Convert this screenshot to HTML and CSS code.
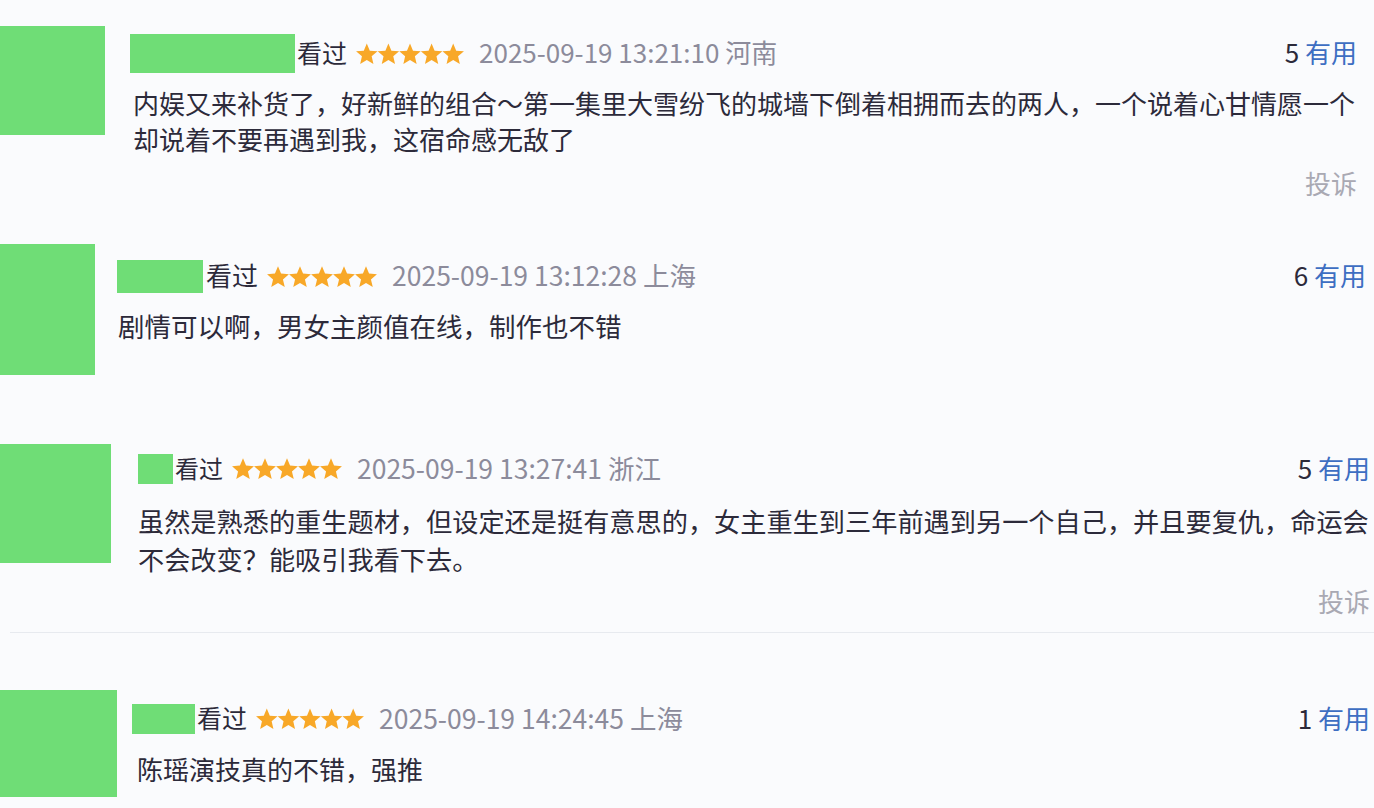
FILE: index.html
```html
<!DOCTYPE html>
<html lang="zh-CN">
<head>
<meta charset="utf-8">
<title>短评</title>
<link rel="stylesheet" href="styles.css">
</head>
<body>
<main class="list">
  <section class="comment c1">
    <div class="avatar"></div>
    <div class="body">
      <div class="head">
        <span class="name"></span><span class="status">看过</span>
        <span class="stars">
          <svg viewBox="0 0 110 22" aria-hidden="true"><g fill="#f8a828"><polygon transform="translate(0 0)" points="11,0.3 14.06,7.59 21.94,8.25 15.95,13.41 17.76,21.1 11,17 4.24,21.1 6.05,13.41 0.06,8.25 7.94,7.59"/><polygon transform="translate(22 0)" points="11,0.3 14.06,7.59 21.94,8.25 15.95,13.41 17.76,21.1 11,17 4.24,21.1 6.05,13.41 0.06,8.25 7.94,7.59"/><polygon transform="translate(44 0)" points="11,0.3 14.06,7.59 21.94,8.25 15.95,13.41 17.76,21.1 11,17 4.24,21.1 6.05,13.41 0.06,8.25 7.94,7.59"/><polygon transform="translate(66 0)" points="11,0.3 14.06,7.59 21.94,8.25 15.95,13.41 17.76,21.1 11,17 4.24,21.1 6.05,13.41 0.06,8.25 7.94,7.59"/><polygon transform="translate(88 0)" points="11,0.3 14.06,7.59 21.94,8.25 15.95,13.41 17.76,21.1 11,17 4.24,21.1 6.05,13.41 0.06,8.25 7.94,7.59"/></g></svg>
        </span>
        <span class="time">2025-09-19 13:21:10 河南</span>
        <span class="votes"><span class="num">5</span> <span class="useful">有用</span></span>
      </div>
      <p class="text">内娱又来补货了，好新鲜的组合～第一集里大雪纷飞的城墙下倒着相拥而去的两人，一个说着心甘情愿一个<br>却说着不要再遇到我，这宿命感无敌了</p>
      <div class="foot"><span class="report">投诉</span></div>
    </div>
  </section>

  <section class="comment c2">
    <div class="avatar"></div>
    <div class="body">
      <div class="head">
        <span class="name"></span><span class="status">看过</span>
        <span class="stars">
          <svg viewBox="0 0 110 22" aria-hidden="true"><g fill="#f8a828"><polygon transform="translate(0 0)" points="11,0.3 14.06,7.59 21.94,8.25 15.95,13.41 17.76,21.1 11,17 4.24,21.1 6.05,13.41 0.06,8.25 7.94,7.59"/><polygon transform="translate(22 0)" points="11,0.3 14.06,7.59 21.94,8.25 15.95,13.41 17.76,21.1 11,17 4.24,21.1 6.05,13.41 0.06,8.25 7.94,7.59"/><polygon transform="translate(44 0)" points="11,0.3 14.06,7.59 21.94,8.25 15.95,13.41 17.76,21.1 11,17 4.24,21.1 6.05,13.41 0.06,8.25 7.94,7.59"/><polygon transform="translate(66 0)" points="11,0.3 14.06,7.59 21.94,8.25 15.95,13.41 17.76,21.1 11,17 4.24,21.1 6.05,13.41 0.06,8.25 7.94,7.59"/><polygon transform="translate(88 0)" points="11,0.3 14.06,7.59 21.94,8.25 15.95,13.41 17.76,21.1 11,17 4.24,21.1 6.05,13.41 0.06,8.25 7.94,7.59"/></g></svg>
        </span>
        <span class="time">2025-09-19 13:12:28 上海</span>
        <span class="votes"><span class="num">6</span> <span class="useful">有用</span></span>
      </div>
      <p class="text">剧情可以啊，男女主颜值在线，制作也不错</p>
    </div>
  </section>

  <section class="comment c3">
    <div class="avatar"></div>
    <div class="body">
      <div class="head">
        <span class="name"></span><span class="status">看过</span>
        <span class="stars">
          <svg viewBox="0 0 110 22" aria-hidden="true"><g fill="#f8a828"><polygon transform="translate(0 0)" points="11,0.3 14.06,7.59 21.94,8.25 15.95,13.41 17.76,21.1 11,17 4.24,21.1 6.05,13.41 0.06,8.25 7.94,7.59"/><polygon transform="translate(22 0)" points="11,0.3 14.06,7.59 21.94,8.25 15.95,13.41 17.76,21.1 11,17 4.24,21.1 6.05,13.41 0.06,8.25 7.94,7.59"/><polygon transform="translate(44 0)" points="11,0.3 14.06,7.59 21.94,8.25 15.95,13.41 17.76,21.1 11,17 4.24,21.1 6.05,13.41 0.06,8.25 7.94,7.59"/><polygon transform="translate(66 0)" points="11,0.3 14.06,7.59 21.94,8.25 15.95,13.41 17.76,21.1 11,17 4.24,21.1 6.05,13.41 0.06,8.25 7.94,7.59"/><polygon transform="translate(88 0)" points="11,0.3 14.06,7.59 21.94,8.25 15.95,13.41 17.76,21.1 11,17 4.24,21.1 6.05,13.41 0.06,8.25 7.94,7.59"/></g></svg>
        </span>
        <span class="time">2025-09-19 13:27:41 浙江</span>
        <span class="votes"><span class="num">5</span> <span class="useful">有用</span></span>
      </div>
      <p class="text">虽然是熟悉的重生题材，但设定还是挺有意思的，女主重生到三年前遇到另一个自己，并且要复仇，命运会<br>不会改变？能吸引我看下去。</p>
      <div class="foot"><span class="report">投诉</span></div>
    </div>
  </section>
  <div class="divider"></div>

  <section class="comment c4">
    <div class="avatar"></div>
    <div class="body">
      <div class="head">
        <span class="name"></span><span class="status">看过</span>
        <span class="stars">
          <svg viewBox="0 0 110 22" aria-hidden="true"><g fill="#f8a828"><polygon transform="translate(0 0)" points="11,0.3 14.06,7.59 21.94,8.25 15.95,13.41 17.76,21.1 11,17 4.24,21.1 6.05,13.41 0.06,8.25 7.94,7.59"/><polygon transform="translate(22 0)" points="11,0.3 14.06,7.59 21.94,8.25 15.95,13.41 17.76,21.1 11,17 4.24,21.1 6.05,13.41 0.06,8.25 7.94,7.59"/><polygon transform="translate(44 0)" points="11,0.3 14.06,7.59 21.94,8.25 15.95,13.41 17.76,21.1 11,17 4.24,21.1 6.05,13.41 0.06,8.25 7.94,7.59"/><polygon transform="translate(66 0)" points="11,0.3 14.06,7.59 21.94,8.25 15.95,13.41 17.76,21.1 11,17 4.24,21.1 6.05,13.41 0.06,8.25 7.94,7.59"/><polygon transform="translate(88 0)" points="11,0.3 14.06,7.59 21.94,8.25 15.95,13.41 17.76,21.1 11,17 4.24,21.1 6.05,13.41 0.06,8.25 7.94,7.59"/></g></svg>
        </span>
        <span class="time">2025-09-19 14:24:45 上海</span>
        <span class="votes"><span class="num">1</span> <span class="useful">有用</span></span>
      </div>
      <p class="text">陈瑶演技真的不错，强推</p>
    </div>
  </section>
</main>
</body>
</html>
```

FILE: styles.css
```css
* { box-sizing: border-box; }

html, body {
  margin: 0;
  padding: 0;
  background: #fafbfd;
}

body {
  width: 1374px;
  height: 808px;
  overflow: hidden;
  font-family: "Noto Sans CJK SC", "Noto Sans", sans-serif;
  color: #2c2a3a;
}

.list { display: flex; flex-direction: column; }

.comment {
  display: flex;
  align-items: flex-start;
}

.avatar {
  flex: none;
  background: #6fdd76;
}

.body {
  flex: 1;
  display: flex;
  flex-direction: column;
}

.head {
  display: flex;
  align-items: center;
  white-space: nowrap;
}

.name {
  flex: none;
  background: #6fdd76;
}

.status,
.time,
.votes { padding-bottom: 4px; }

.status { color: #2c2a3a; }

.stars {
  display: flex;
  align-items: center;
  margin-left: 9px;
}

.stars svg { display: block; }

.time {
  color: #8c8b9b;
  margin-left: 15px;
  font-size: 26.5px;
}

.votes { margin-left: auto; font-size: 26px; }
.num { color: #2c2a3a; }
.useful { color: #3d6ec2; }

.text {
  margin: 0;
  white-space: nowrap;
  color: #2c2a3a;
}

.foot { text-align: right; }
.report { color: #a9a9b3; font-size: 26px; }

/* row 1 */
.c1 { height: 220px; padding-top: 26px; }
.c1 .avatar { width: 105px; height: 109px; }
.c1 .body { margin-left: 25px; padding-top: 8px; padding-right: 17px; }
.c1 .head { height: 39px; font-size: 25px; }
.c1 .name { width: 165px; height: 39px; margin-right: 2px; }
.c1 .stars svg { width: 108px; height: 22px; }
.c1 .time { font-size: 26px; }
.c1 .text { font-size: 26px; line-height: 36px; margin-top: 12px; padding-left: 3px; }
.c1 .foot { line-height: 36px; margin-top: 8px; }

/* row 2 */
.c2 { height: 210px; padding-top: 24px; }
.c2 .avatar { width: 95px; height: 131px; }
.c2 .body { margin-left: 22px; padding-top: 16px; padding-right: 8px; }
.c2 .head { height: 33px; font-size: 26px; }
.c2 .name { width: 86px; height: 33px; margin-right: 3px; }
.c2 .stars svg { width: 110px; height: 22px; }
.c2 .text { font-size: 26.5px; line-height: 36px; margin-top: 15px; padding-left: 1px; }

/* row 3 */
.c3 { height: 202px; padding-top: 14px; }
.c3 .avatar { width: 111px; height: 119px; }
.c3 .body { margin-left: 27px; padding-top: 10px; padding-right: 4px; }
.c3 .head { height: 30px; font-size: 24px; }
.c3 .name { width: 35px; height: 30px; margin-right: 2px; }
.c3 .stars svg { width: 110px; height: 22px; }
.c3 .text { font-size: 26.2px; line-height: 38px; margin-top: 18px; padding-left: 0; }
.c3 .foot { line-height: 38px; margin-top: 4px; }

.divider {
  height: 1px;
  margin-left: 10px;
  background: #e7eaef;
}

/* row 4 */
.c4 { flex: 1; padding-top: 57px; }
.c4 .avatar { width: 117px; height: 107px; }
.c4 .body { margin-left: 15px; padding-top: 14px; padding-right: 4px; }
.c4 .head { height: 30px; font-size: 25px; }
.c4 .name { width: 63px; height: 30px; margin-right: 2px; }
.c4 .stars svg { width: 108px; height: 22px; }
.c4 .text { font-size: 26px; line-height: 36px; margin-top: 17px; padding-left: 5px; }
```
